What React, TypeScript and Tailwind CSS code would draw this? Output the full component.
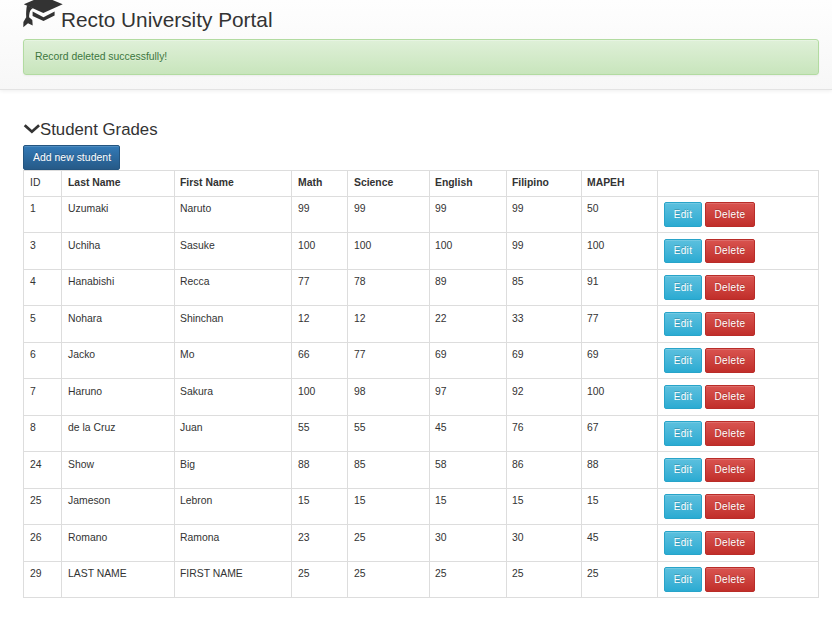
import React from "react";

const heads = ["Last Name", "First Name", "Math", "Science", "English", "Filipino", "MAPEH", ""];

const students: string[][] = [
  ["1", "Uzumaki", "Naruto", "99", "99", "99", "99", "50"],
  ["3", "Uchiha", "Sasuke", "100", "100", "100", "99", "100"],
  ["4", "Hanabishi", "Recca", "77", "78", "89", "85", "91"],
  ["5", "Nohara", "Shinchan", "12", "12", "22", "33", "77"],
  ["6", "Jacko", "Mo", "66", "77", "69", "69", "69"],
  ["7", "Haruno", "Sakura", "100", "98", "97", "92", "100"],
  ["8", "de la Cruz", "Juan", "55", "55", "45", "76", "67"],
  ["24", "Show", "Big", "88", "85", "58", "86", "88"],
  ["25", "Jameson", "Lebron", "15", "15", "15", "15", "15"],
  ["26", "Romano", "Ramona", "23", "25", "30", "30", "45"],
  ["29", "LAST NAME", "FIRST NAME", "25", "25", "25", "25", "25"],
];

const columns = "grid grid-cols-[38px_113px_117px_56px_82px_77px_75px_76px_161px]";
const cell = "border-r border-b border-[#dddddd] whitespace-nowrap";
// Left padding of each column, in order from ID to MAPEH and the actions.
const pads = ["pl-1.5", "pl-1.5", "pl-[5px]", "pl-1.5", "pl-1.5", "pl-[5px]", "pl-[5px]", "pl-[5px]", "pl-1.5"];
const button =
  "rounded-[2px] border text-[10px] leading-[22px] tracking-[0.35px] text-white text-center [text-shadow:0_-1px_0_rgba(0,0,0,0.2)] shadow-[inset_0_1px_0_rgba(255,255,255,0.15)]";

function GraduationCap() {
  return (
    <svg className="block shrink-0" width="40" height="28" viewBox="0 0 40 28" fill="#333333">
      <path d="M0.800 4.300 20 -4 39.700 4.300 20.300 12.900Z" />
      <path d="M4 5.300 10 7.900C7.300 9.500 6.200 12 6.100 17.300L9.300 20 9.700 25.600 5 23.200 0.300 27.300 0.400 22 3.200 17.300C3 13 3.200 9 4 5.300Z" />
      <path d="M9.600 11.600 20.500 17.200 31.600 11.600V15.600L20.500 21.100 9.600 16Z" />
    </svg>
  );
}

export default function App() {
  return (
    <div className="h-[622px] w-[832px] overflow-hidden bg-white font-['Liberation_Sans',Arial,sans-serif] text-[10.4px] text-[#333333]">
      <header className="h-[90px] border-b border-[#e3e3e3] bg-linear-to-b from-[#fefefe] to-[#f7f7f7] pr-[13px] pl-[23px] shadow-[0_1px_4px_rgba(0,0,0,0.07)]">
        <div className="flex h-[39px]">
          <GraduationCap />
          <h1 className="-ml-[2px] pt-2 text-[20.8px] leading-6 whitespace-nowrap">Recto University Portal</h1>
        </div>
        <div className="h-9 rounded-[3px] border border-[#b2dba1] bg-linear-to-b from-[#dff0d8] to-[#c8e5bc] pl-[11px] leading-[34px] text-[#3c763d] shadow-[inset_0_1px_0_rgba(255,255,255,0.25),0_1px_2px_rgba(0,0,0,0.05)] [text-shadow:0_1px_0_rgba(255,255,255,0.2)]">
          Record deleted successfully!
        </div>
      </header>
      <main className="pl-[23px]">
        <div className="flex h-[55px] pt-[30px]">
          <svg className="mt-1 block" width="17" height="12" viewBox="0 0 17 12" fill="none" stroke="#333333" strokeWidth="2.8">
            <path d="M1.700 1.200 8.900 7.700 16.100 1.200" />
          </svg>
          <h2 className="text-[16.800px] leading-5">Student Grades</h2>
        </div>
        <button className="block h-[25px] w-[97px] rounded-[2px] border border-[#245580] bg-linear-to-b from-[#337ab7] to-[#265a88] pl-px text-[10.4px] leading-[23px] tracking-[0.05px] whitespace-nowrap text-white shadow-[inset_0_1px_0_rgba(255,255,255,0.15)] [text-shadow:0_-1px_0_rgba(0,0,0,0.2)]">
          Add new student
        </button>
        <div className="w-[796px] border-t border-l border-[#dddddd]">
          <div className={`${columns} h-[26px] leading-[24px]`}>
            <div className={`${cell} ${pads[0]}`}>ID</div>
            {heads.map((h, i) => (
              <div key={i} className={`${cell} ${pads[i + 1]} font-bold`}>{h}</div>
            ))}
          </div>
          {students.map((row, i) => (
            <div key={row[0]} className={`${columns} ${i % 2 ? "h-[37px] leading-[26px]" : "h-[36px] leading-[24px]"}`}>
              {row.map((v, j) => (
                <div key={j} className={`${cell} ${pads[j]}`}>{v}</div>
              ))}
              <div className={`${cell} ${pads[8]} flex items-start gap-[3px] ${i % 2 ? "pt-1.5" : "pt-[5px]"}`}>
                <button className={`${button} ${i % 2 ? "h-6" : "h-[25px]"} w-[38px] border-[#28a4c9] bg-linear-to-b from-[#5bc0de] to-[#2aabd2]`}>Edit</button>
                <button className={`${button} ${i % 2 ? "h-6" : "h-[25px]"} w-[50px] border-[#b92c28] bg-linear-to-b from-[#d9534f] to-[#c12e2a]`}>Delete</button>
              </div>
            </div>
          ))}
        </div>
      </main>
    </div>
  );
}
